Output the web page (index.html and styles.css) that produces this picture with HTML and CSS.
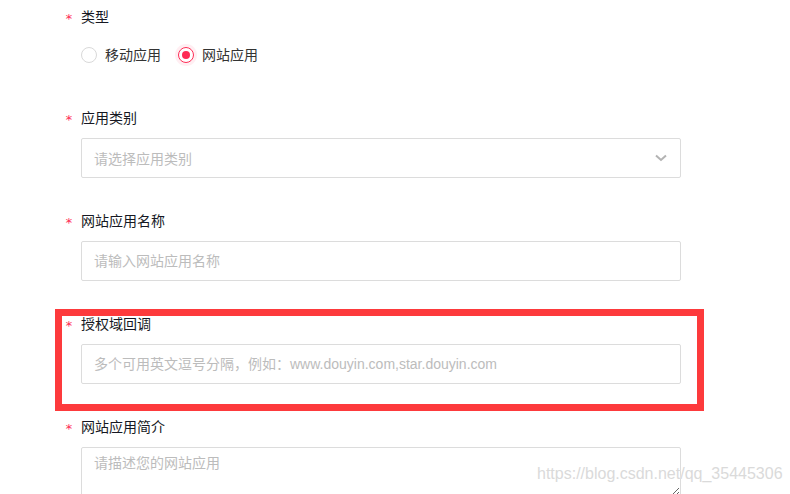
FILE: index.html
```
<!DOCTYPE html>
<html lang="zh-CN">
<head>
    <meta charset="UTF-8">
    <title>创建网站应用</title>
    <link rel="stylesheet" href="styles.css">
</head>
<body>
    <form class="app-form">
        <div class="form-item">
            <label class="form-label"><span class="required">*</span>类型</label>
            <div class="radio-group">
                <label class="radio"><span class="radio-dot"></span>移动应用</label>
                <label class="radio is-checked"><span class="radio-dot"></span>网站应用</label>
            </div>
        </div>

        <div class="form-item">
            <label class="form-label"><span class="required">*</span>应用类别</label>
            <div class="select">
                <span class="select-placeholder">请选择应用类别</span>
                <svg class="select-arrow" width="12" height="8" viewBox="0 0 12 8">
                    <path d="M1 1.5 L6 6 L11 1.5" fill="none" stroke="#b3b3b3" stroke-width="2"/>
                </svg>
            </div>
        </div>

        <div class="form-item">
            <label class="form-label"><span class="required">*</span>网站应用名称</label>
            <input class="input" type="text" placeholder="请输入网站应用名称">
        </div>

        <div class="form-item">
            <label class="form-label"><span class="required">*</span>授权域回调</label>
            <input class="input" type="text" placeholder="多个可用英文逗号分隔，例如：www.douyin.com,star.douyin.com">
        </div>

        <div class="form-item">
            <label class="form-label"><span class="required">*</span>网站应用简介</label>
            <textarea class="textarea" placeholder="请描述您的网站应用"></textarea>
        </div>
    </form>

    <!-- annotation drawn over the screenshot -->
    <div class="highlight"></div>
    <div class="watermark">https://blog.csdn.net/qq_35445306</div>
</body>
</html>
```

FILE: styles.css
```
body {
    margin: 0;
    background: #fff;
    font-family: "Liberation Sans", "Noto Sans CJK SC", sans-serif;
    font-size: 14px;
    color: #161823;
    overflow: hidden;
}

.app-form {
    padding: 7px 0 0 81px;
    width: 600px;
}

.form-item {
    margin-bottom: 33px;
}

.form-label {
    display: block;
    height: 22px;
    line-height: 22px;
    margin: -1px 0 9px;
}

.required {
    display: inline-block;
    width: 16px;
    margin-left: -16px;
    color: #fe2c55;
    font-family: "DejaVu Sans Mono", monospace;
    font-size: 13px;
    position: relative;
    top: 1px;
}

/* radios */
.radio-group {
    display: flex;
    align-items: center;
    height: 40px;
    margin-top: -2px;
}

.radio {
    display: flex;
    align-items: center;
    gap: 8px;
    margin-right: 17px;
    color: #333;
    line-height: 22px;
}

.radio-dot {
    box-sizing: border-box;
    width: 16px;
    height: 16px;
    border: 1px solid #d9d9d9;
    border-radius: 50%;
    position: relative;
}

.radio.is-checked .radio-dot {
    border: 1.5px solid #fe2c55;
    box-shadow: 0 0 0 3px rgba(254, 44, 85, 0.08);
}

.radio.is-checked .radio-dot::after {
    content: "";
    position: absolute;
    left: 2.5px;
    top: 2.5px;
    width: 8px;
    height: 8px;
    border-radius: 50%;
    background: #fe2c55;
}

/* fields */
.select,
.input,
.textarea {
    box-sizing: border-box;
    display: block;
    width: 600px;
    border: 1px solid #dcdcdc;
    border-radius: 2px;
    background: #fff;
    font-family: inherit;
    font-size: 14px;
    color: #161823;
    outline: none;
}

.select,
.input {
    height: 40px;
    padding: 0 12px;
}

.select {
    display: flex;
    align-items: center;
    justify-content: space-between;
}

.select-placeholder {
    color: #bcbcbc;
}

.select-arrow {
    margin-right: 1px;
}

.input::placeholder,
.textarea::placeholder {
    color: #bcbcbc;
}

.textarea {
    height: 50px;
    padding: 4px 12px;
    line-height: 22px;
    resize: both;
}

/* red annotation frame */
.highlight {
    position: absolute;
    left: 55px;
    top: 309px;
    width: 635px;
    height: 88px;
    border: 7px solid #fd3a3c;
    pointer-events: none;
}

.watermark {
    position: absolute;
    left: 537px;
    top: 465px;
    font-family: "Liberation Sans", Arial, sans-serif;
    font-size: 16px;
    color: #dadada;
    text-shadow: 0 0 1px #fff;
    pointer-events: none;
}
```
